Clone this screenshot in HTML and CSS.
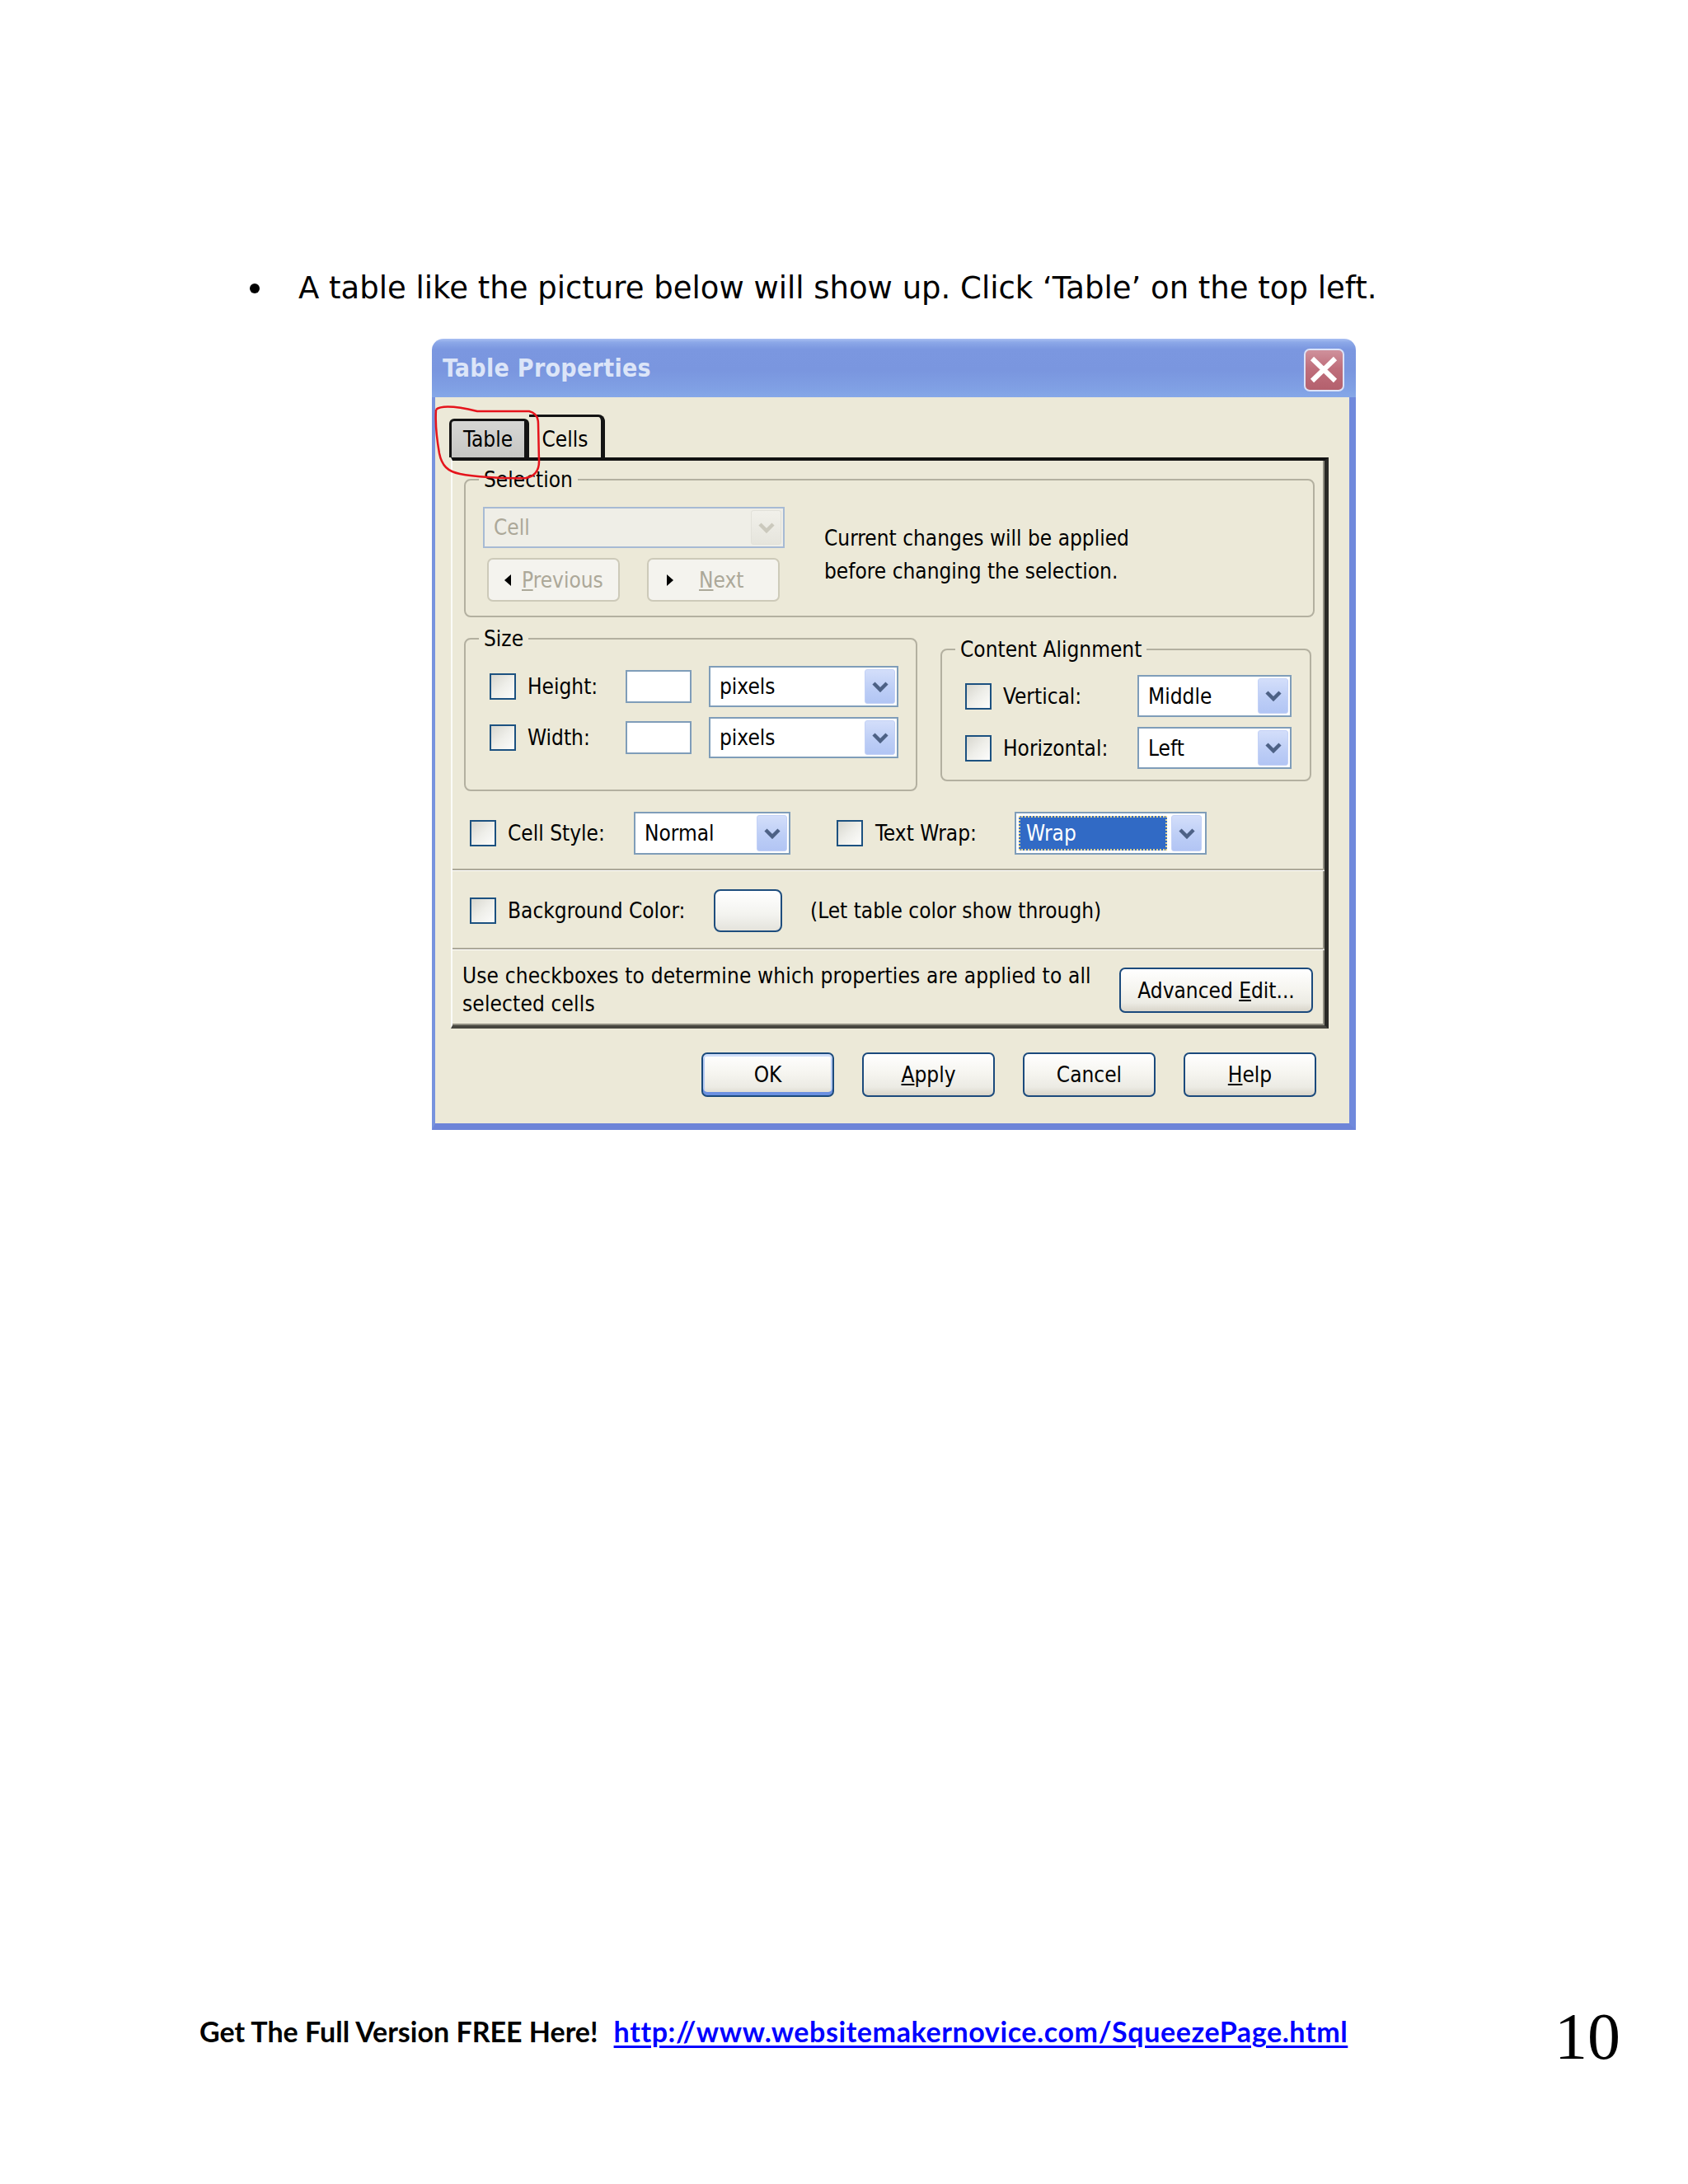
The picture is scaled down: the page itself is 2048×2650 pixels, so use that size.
FILE: index.html
```html
<!DOCTYPE html>
<html lang="en">
<head>
<meta charset="utf-8">
<title>Table Properties</title>
<link rel="stylesheet" href="styles.css">
</head>
<body>
<main class="page">
  <ul class="steps">
    <li>A table like the picture below will show up. Click ‘Table’ on the top left.</li>
  </ul>

  <section class="dialog">
    <header class="titlebar">
      <h1 class="title">Table Properties</h1>
      <span class="close"><svg viewBox="0 0 45 48" width="45" height="48"><path d="M8 10 L36 37 M36 10 L8 37" stroke="#fff" stroke-width="6" fill="none"/></svg></span>
    </header>

    <div class="dlg-body">
      <div class="tabs">
        <div class="tab tab-table">Table</div>
        <div class="tab tab-cells">Cells</div>
        <svg class="scribble" viewBox="0 0 132 96" width="132" height="96"><path d="M1 9 C8 3 30 6 51 11 L114 11 C122 13 125 18 125 26 L126 72 C126 84 120 90 110 92 C80 93 45 90 30 87 C15 84 8 77 5 62 C2 45 0 25 1 9" fill="none" stroke="#e5141c" stroke-width="2.5"/></svg>
      </div>

      <div class="panel">
        <fieldset class="group group-sel">
          <legend>Selection</legend>
          <div class="sel-grid">
            <div class="sel-left">
              <div class="combo combo-disabled combo-cell"><span class="val">Cell</span><span class="drop"><svg class="chev" viewBox="0 0 20 13" width="20" height="13"><path d="M2 2 L10 10 L18 2" fill="none" stroke="#cbc9bd" stroke-width="4.5"/></svg></span></div>
              <div class="nav-btns">
                <span class="navbtn nav-prev"><svg viewBox="0 0 8 14" width="8" height="14"><path d="M8 0 L0 7 L8 14 Z" fill="#000"/></svg><span class="navtxt"><u>P</u>revious</span></span>
                <span class="navbtn nav-next"><svg viewBox="0 0 8 14" width="8" height="14"><path d="M0 0 L8 7 L0 14 Z" fill="#000"/></svg><span class="navtxt"><u>N</u>ext</span></span>
              </div>
            </div>
            <p class="sel-note">Current changes will be applied<br>before changing the selection.</p>
          </div>
        </fieldset>

        <div class="groups-row">
          <fieldset class="group group-size">
            <legend>Size</legend>
            <div class="frows size-rows">
              <div class="frow">
                <span class="cb"></span><span class="lbl lbl-size">Height:</span><span class="tbox"></span>
                <span class="combo combo-pixels"><span class="val">pixels</span><span class="drop"><svg class="chev" viewBox="0 0 20 13" width="20" height="13"><path d="M2 2 L10 10 L18 2" fill="none" stroke="#4d6185" stroke-width="4.5"/></svg></span></span>
              </div>
              <div class="frow">
                <span class="cb"></span><span class="lbl lbl-size">Width:</span><span class="tbox"></span>
                <span class="combo combo-pixels"><span class="val">pixels</span><span class="drop"><svg class="chev" viewBox="0 0 20 13" width="20" height="13"><path d="M2 2 L10 10 L18 2" fill="none" stroke="#4d6185" stroke-width="4.5"/></svg></span></span>
              </div>
            </div>
          </fieldset>

          <fieldset class="group group-align">
            <legend>Content Alignment</legend>
            <div class="frows align-rows">
              <div class="frow frow-a">
                <span class="cb"></span><span class="lbl lbl-align">Vertical:</span>
                <span class="combo combo-align"><span class="val">Middle</span><span class="drop"><svg class="chev" viewBox="0 0 20 13" width="20" height="13"><path d="M2 2 L10 10 L18 2" fill="none" stroke="#4d6185" stroke-width="4.5"/></svg></span></span>
              </div>
              <div class="frow frow-a">
                <span class="cb"></span><span class="lbl lbl-align">Horizontal:</span>
                <span class="combo combo-align"><span class="val">Left</span><span class="drop"><svg class="chev" viewBox="0 0 20 13" width="20" height="13"><path d="M2 2 L10 10 L18 2" fill="none" stroke="#4d6185" stroke-width="4.5"/></svg></span></span>
              </div>
            </div>
          </fieldset>
        </div>

        <div class="optrow row-style">
          <span class="cb"></span><span class="lbl lbl-style">Cell Style:</span>
          <span class="combo combo-normal"><span class="val">Normal</span><span class="drop"><svg class="chev" viewBox="0 0 20 13" width="20" height="13"><path d="M2 2 L10 10 L18 2" fill="none" stroke="#4d6185" stroke-width="4.5"/></svg></span></span>
          <span class="cb cb-wrap"></span><span class="lbl lbl-wrap">Text Wrap:</span>
          <span class="combo combo-wrap"><span class="val val-sel">Wrap</span><span class="drop"><svg class="chev" viewBox="0 0 20 13" width="20" height="13"><path d="M2 2 L10 10 L18 2" fill="none" stroke="#4d6185" stroke-width="4.5"/></svg></span></span>
        </div>

        <hr class="sep sep-1">

        <div class="optrow row-bg">
          <span class="cb"></span><span class="lbl lbl-bg">Background Color:</span>
          <span class="colorbtn"></span>
          <span class="bg-note">(Let table color show through)</span>
        </div>

        <hr class="sep sep-2">

        <div class="info">
          <p class="info-text">Use checkboxes to determine which properties are applied to all<br>selected cells</p>
          <span class="btn btn-adv"><span>Advanced <u>E</u>dit...</span></span>
        </div>
      </div>

      <div class="actions">
        <span class="btn btn-default">OK</span>
        <span class="btn"><span><u>A</u>pply</span></span>
        <span class="btn">Cancel</span>
        <span class="btn"><span><u>H</u>elp</span></span>
      </div>
    </div>
  </section>
</main>

<footer class="foot">
  <p class="foot-text">Get The Full Version FREE Here!<a class="foot-link" href="#">http://www.websitemakernovice.com/SqueezePage.html</a></p>
  <span class="pagenum">10</span>
</footer>
</body>
</html>
```

FILE: styles.css
```css
* { box-sizing: border-box; }

html, body {
  margin: 0;
  padding: 0;
  background: #fff;
}

body {
  width: 2048px;
  height: 2650px;
  color: #000;
  font-family: "DejaVu Sans", sans-serif;
  overflow: hidden;
}

.page { padding-top: 328px; }

/* bullet line */
.steps {
  list-style: none;
  margin: 0;
  padding: 0;
  font-family: "DejaVu Sans", sans-serif;
  font-size: 37px;
  line-height: 44px;
}
.steps li {
  display: flex;
  align-items: center;
  white-space: nowrap;
}
.steps li::before {
  content: "";
  flex: none;
  width: 12px;
  height: 12px;
  border-radius: 50%;
  background: #000;
  margin-left: 303px;
  margin-right: 47px;
}

/* dialog */
.dialog {
  width: 1121px;
  margin: 39px 0 0 524px;
  font-family: "DejaVu Sans Condensed", "DejaVu Sans", sans-serif;
  font-size: 26px;
  line-height: 30px;
  color: #000;
}

.titlebar {
  height: 71px;
  display: flex;
  align-items: center;
  justify-content: space-between;
  padding: 0 14px 0 13px;
  border-radius: 14px 14px 0 0;
  background: linear-gradient(to bottom, #a9bff2 0%, #8ca8e8 6%, #7b97e0 18%, #7a96df 55%, #80a0e4 85%, #86a8e8 100%);
}
.title {
  margin: 0;
  font-size: 30px;
  line-height: 30px;
  font-weight: bold;
  color: #dce5f8;
  letter-spacing: 0.3px;
}
.close {
  flex: none;
  width: 49px;
  height: 52px;
  margin-top: 5px;
  border: 2px solid #dde3f7;
  border-radius: 7px;
  background: linear-gradient(to bottom, #cf919c, #bf6f7c 45%, #b4606d);
  display: flex;
}

.dlg-body {
  height: 889px;
  padding-top: 21px;
  background: #ece9d8;
  border-left: 4px solid #7793de;
  border-right: 8px solid #7089dc;
  border-bottom: 8px solid #6d84d8;
}

/* tabs */
.tabs {
  position: relative;
  display: flex;
  align-items: flex-end;
  height: 52px;
  padding-left: 17px;
}
.tab {
  display: flex;
  align-items: center;
  justify-content: center;
}
.tab-table {
  width: 97px;
  height: 47px;
  border: 3px solid #141414;
  border-right-width: 6px;
  border-bottom: 0;
  border-radius: 6px 6px 0 0;
  background: linear-gradient(to bottom, #d6d6d4, #c6c6c3);
}
.tab-cells {
  width: 92px;
  height: 52px;
  padding-top: 4px;
  border-top: 3px solid #141414;
  border-right: 5px solid #141414;
  border-radius: 0 8px 0 0;
  background: #ece9d8;
}
.scribble {
  position: absolute;
  left: 0;
  top: -15px;
  overflow: visible;
}

/* tab panel */
.panel {
  margin: 0 25px 0 19px;
  height: 693px;
  border-top: 4px solid #121212;
  border-left: 2px solid #fbfbf8;
  border-right: 5px solid #2a2a26;
  border-bottom: 4px solid #47463f;
  box-shadow: inset -2px 0 #8f8d80, inset 0 -2px #8f8d80;
}

.group {
  margin: 0;
  padding: 0;
  min-width: 0;
  border: 2px solid #b3b0a0;
  border-radius: 8px;
}
.group legend {
  margin-left: 16px;
  padding: 0 6px;
  font-size: 26px;
  line-height: 30px;
}

.group-sel { margin: 8px 12px 0 14px; }
.sel-grid {
  display: flex;
  align-items: center;
  padding: 18px 0 17px 21px;
}
.sel-left {
  display: flex;
  flex-direction: column;
  gap: 12px;
}
.nav-btns {
  display: flex;
  gap: 33px;
  padding-left: 5px;
}
.navbtn {
  width: 161px;
  height: 53px;
  display: flex;
  align-items: center;
  border: 2px solid #cdcab9;
  border-radius: 7px;
  background: #f4f3ee;
  color: #aca899;
}
.nav-prev { padding-left: 19px; }
.nav-prev .navtxt { margin-left: 13px; }
.nav-next { padding-left: 22px; }
.nav-next .navtxt { margin-left: 31px; }
.sel-note {
  margin: 0 0 0 48px;
  line-height: 40px;
}

.groups-row {
  display: flex;
  align-items: flex-start;
  gap: 28px;
  margin-top: 11px;
  padding-left: 14px;
}
.group-size { width: 550px; }
.group-align { width: 450px; margin-top: 13px; }

.frows {
  display: flex;
  flex-direction: column;
  gap: 12px;
}
.size-rows { padding: 18px 0 38px 29px; }
.align-rows { padding: 16px 0 13px 28px; }
.frow {
  display: flex;
  align-items: center;
  height: 50px;
}
.frow-a { height: 51px; }

/* controls */
.cb {
  flex: none;
  width: 32px;
  height: 32px;
  border: 2px solid #1c5180;
  background: linear-gradient(135deg, #d8d7cf 0%, #eeeee9 50%, #fdfdfc 100%);
}
.lbl {
  flex: none;
  margin-left: 14px;
  white-space: nowrap;
}
.lbl-size { width: 119px; }
.lbl-align { width: 163px; }
.lbl-style { width: 153px; }
.lbl-wrap { width: 169px; margin-left: 15px; }
.lbl-bg { width: 250px; }

.tbox {
  flex: none;
  width: 80px;
  height: 40px;
  margin-right: 21px;
  border: 2px solid #7f9db9;
  background: #fff;
}

.combo {
  flex: none;
  display: flex;
  height: 50px;
  border: 2px solid #7f9db9;
  background: #fff;
}
.combo .val {
  flex: 1;
  display: flex;
  align-items: center;
  padding-left: 11px;
  white-space: nowrap;
}
.combo .drop {
  flex: none;
  width: 37px;
  margin: 2px;
  border-radius: 3px;
  border: 1px solid #c3d1f6;
  background: linear-gradient(to bottom, #d3defa, #bccdf6 60%, #b2c5f4);
  display: flex;
  align-items: center;
  justify-content: center;
}
.combo-pixels { width: 230px; }
.combo-align { width: 187px; height: 51px; }
.combo-normal { width: 190px; height: 52px; }
.combo-wrap { width: 233px; height: 52px; }
.combo-cell { width: 366px; }

.combo-disabled {
  border-color: #a7bad4;
  background: #efeee7;
  color: #aca899;
}
.combo-disabled .drop {
  border-color: #e2e1d9;
  background: linear-gradient(to bottom, #f1f0ea, #e6e5dd);
}

.combo-wrap .val-sel {
  flex: none;
  width: 180px;
  margin: 3px 0 3px 3px;
  padding-left: 7px;
  background: #316ac5;
  color: #fff;
  border: 2px dotted #e4d48e;
}
.combo-wrap .drop { margin-left: 5px; }

.optrow {
  display: flex;
  align-items: center;
  height: 52px;
  padding-left: 21px;
}
.row-style { margin-top: 25px; }
.cb-wrap { margin-left: 56px; }

.sep {
  margin: 17px 0 0;
  height: 0;
  border: 0;
  border-top: 2px solid #aca899;
  border-bottom: 1px solid #fff;
}
.sep-2 { margin-top: 19px; }

.row-bg { margin-top: 22px; }
.colorbtn {
  flex: none;
  width: 83px;
  height: 52px;
  border: 2px solid #1e4d7d;
  border-radius: 8px;
  background: linear-gradient(to bottom, #fff, #f3f3ef 60%, #e4e3dc);
}
.bg-note { margin-left: 34px; white-space: nowrap; }

.info {
  display: flex;
  justify-content: space-between;
  align-items: flex-start;
  padding: 14px 14px 0 12px;
}
.info-text {
  margin: 0;
  line-height: 34px;
  white-space: nowrap;
  letter-spacing: 0.15px;
}

.btn {
  flex: none;
  display: flex;
  align-items: center;
  justify-content: center;
  width: 161px;
  height: 54px;
  border: 2px solid #1b4a7c;
  border-radius: 7px;
  background: linear-gradient(to bottom, #ffffff 0%, #f6f5f0 45%, #ecebe4 80%, #d9d5ca 100%);
  white-space: nowrap;
}
.btn-adv {
  width: 235px;
  height: 55px;
  margin-top: 7px;
}
.btn-default {
  box-shadow: inset 0 3px #cfdef9, inset 0 -4px #6b90e1, inset 2px 0 #b7cbf3, inset -2px 0 #b7cbf3;
}

.actions {
  display: flex;
  justify-content: flex-end;
  gap: 34px;
  padding: 29px 40px 0 0;
}

/* footer */
.foot {
  display: flex;
  align-items: flex-start;
  margin-top: 1060px;
  padding: 0 82px 0 242px;
}
.foot-text {
  margin: 0;
  padding-top: 13px;
  font-family: Lato, "Open Sans", sans-serif;
  font-weight: bold;
  font-size: 34px;
  line-height: 42px;
  white-space: nowrap;
}
.foot-link {
  margin-left: 19px;
  color: #0000ff;
  letter-spacing: 0.6px;
  text-decoration: underline;
  text-decoration-thickness: 3px;
  text-underline-offset: 4px;
}
.pagenum {
  margin-left: auto;
  font-family: "Liberation Serif", serif;
  font-size: 80px;
  line-height: 80px;
}
```
